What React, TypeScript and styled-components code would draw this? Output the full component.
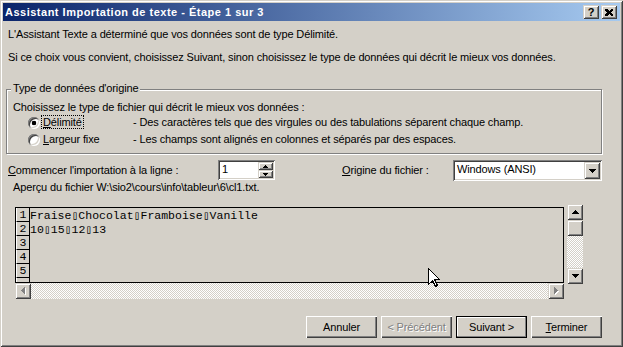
import React from 'react';
import styled, { createGlobalStyle, css } from 'styled-components';

const FACE = '#d4d0c8';

const GlobalStyle = createGlobalStyle`
  * { box-sizing: border-box; }
  html, body { margin: 0; padding: 0; background: ${FACE}; }
`;

// classic 3D bevels
const raised = css`
  background: ${FACE};
  box-shadow: inset 1px 1px ${FACE}, inset -1px -1px #404040, inset 2px 2px #fff, inset -2px -2px #808080;
`;
const sunken = css`
  background: #fff;
  box-shadow: inset 1px 1px #808080, inset -1px -1px #fff, inset 2px 2px #404040, inset -2px -2px ${FACE};
`;

const Window = styled.div`
  position: relative;
  width: 623px;
  height: 347px;
  padding: 3px;
  background: ${FACE};
  box-shadow: inset 1px 1px ${FACE}, inset -1px -1px #404040, inset 2px 2px #fff, inset -2px -2px #808080;
  font-family: "Liberation Sans", Arial, sans-serif;
  font-size: 11px;
  line-height: 13px;
  letter-spacing: -0.13px;
  color: #000;
  display: flex;
  flex-direction: column;
  overflow: hidden;
`;

const TitleBar = styled.div`
  flex: none;
  height: 18px;
  display: flex;
  align-items: center;
  padding: 0 3px 0 2px;
  background: linear-gradient(to right, #0a246a, #a6caf0);
  color: #fff;
  font-weight: bold;
  letter-spacing: 0.5px;
`;

const TitleText = styled.span`
  flex: 1;
  white-space: nowrap;
`;

const CaptionButton = styled.div`
  ${raised}
  width: 16px;
  height: 14px;
  display: flex;
  align-items: center;
  justify-content: center;
  color: #000;
  font-weight: bold;
  font-size: 11px;
  line-height: 11px;
  letter-spacing: 0;
  & + & {
    margin-left: 2px;
  }
`;

const Body = styled.div`
  flex: 1;
  display: flex;
  flex-direction: column;
  padding-left: 3px;
`;

const Intro = styled.p<{ $top: number }>`
  margin: ${p => p.$top}px 0 0 2px;
  white-space: nowrap;
`;

const Group = styled.div`
  position: relative;
  width: 596px;
  margin-top: 25px;
  padding: 11px 0 5px 6px;
  border: 1px solid #808080;
  box-shadow: 1px 1px #fff, inset 1px 1px #fff;
`;

const Legend = styled.span`
  position: absolute;
  top: -8px;
  left: 4px;
  padding: 0 2px;
  background: ${FACE};
  white-space: nowrap;
`;

const OptionRow = styled.div`
  display: flex;
  align-items: center;
  height: 17px;
  white-space: nowrap;
`;

const Radio = styled.span<{ $checked?: boolean }>`
  flex: none;
  width: 12px;
  height: 12px;
  margin-left: 15px;
  border-radius: 50%;
  background: ${p => (p.$checked ? 'radial-gradient(circle, #000 0 2px, #fff 2.6px)' : '#fff')};
  box-shadow: inset 1px 1px #808080, inset -1px -1px #fff, inset 2px 2px #404040, inset -2px -2px ${FACE};
`;

const OptionLabel = styled.span`
  width: 91px;
  margin-left: 2px;
`;

const Focus = styled.span<{ $on?: boolean }>`
  padding: 0 1px;
  outline: ${p => (p.$on ? '1px dotted #000' : 'none')};
`;

const ControlRow = styled.div`
  display: flex;
  align-items: flex-start;
  height: 21px;
  margin: 6px 0 0 2px;
  white-space: nowrap;
`;

const FieldLabel = styled.span<{ $width: number; $indent?: number }>`
  width: ${p => p.$width}px;
  margin-left: ${p => p.$indent ?? 0}px;
  padding-top: 4px;
`;

const Spinner = styled.div`
  ${sunken}
  width: 57px;
  height: 20px;
  padding: 2px;
  display: flex;
`;

const FieldValue = styled.span`
  flex: 1;
  padding: 1px 0 0 2px;
`;

const SpinButtons = styled.div`
  width: 15px;
  display: flex;
  flex-direction: column;
`;

const SpinButton = styled.div`
  ${raised}
  flex: 1;
  display: flex;
  align-items: center;
  justify-content: center;
`;

const Combo = styled.div`
  ${sunken}
  width: 149px;
  height: 21px;
  padding: 2px;
  display: flex;
`;

const DropButton = styled.div`
  ${raised}
  width: 16px;
  display: flex;
  align-items: center;
  justify-content: center;
`;

const Caption = styled.div`
  margin: 0 0 0 7px;
  height: 13px;
  white-space: nowrap;
`;

const PreviewArea = styled.div`
  display: flex;
  align-items: flex-start;
  margin: 10px 0 0 9px;
`;

const PreviewColumn = styled.div`
  width: 549px;
  margin-top: 3px;
`;

const Grid = styled.div`
  height: 76px;
  border: 1px solid #000;
  background: ${FACE};
  overflow: hidden;
  font-family: "Liberation Mono", "Courier New", monospace;
  font-size: 11.5px;
  line-height: 13px;
  letter-spacing: 0;
`;

const GridRow = styled.div`
  display: flex;
  height: 14px;
`;

const RowNumber = styled.div`
  flex: none;
  width: 14px;
  height: 14px;
  border-left: 1px solid #fff;
  border-right: 1px solid #000;
  border-bottom: 1px solid #000;
  text-align: center;
`;

const RowText = styled.div`
  padding-top: 1px;
  white-space: pre;
`;

const Tab = styled.span`
  font-family: "DejaVu Sans Mono", monospace;
  font-size: 11.5px;
`;

const HScroll = styled.div`
  display: flex;
  height: 16px;
`;

const Track = styled.div`
  flex: 1;
  background: repeating-conic-gradient(#fff 0 25%, ${FACE} 0 50%) 0 0 / 2px 2px;
`;

const ScrollButton = styled.div`
  ${raised}
  flex: none;
  width: 16px;
  height: 16px;
  display: flex;
  align-items: center;
  justify-content: center;
`;

const VScroll = styled.div`
  width: 16px;
  height: 80px;
  margin-left: 3px;
  display: flex;
  flex-direction: column;
`;

const Thumb = styled.div`
  ${raised}
  flex: none;
  height: 16px;
`;

const ButtonRow = styled.div`
  display: flex;
  gap: 4px;
  margin: 17px 0 0 300px;
`;

const PushButton = styled.div<{ $default?: boolean; $disabled?: boolean }>`
  width: 71px;
  height: 22px;
  display: flex;
  align-items: center;
  justify-content: center;
  background: ${FACE};
  white-space: nowrap;
  color: ${p => (p.$disabled ? '#808080' : '#000')};
  text-shadow: ${p => (p.$disabled ? '1px 1px #fff' : 'none')};
  box-shadow: ${p =>
    p.$default
      ? `inset 0 0 0 1px #000, inset -2px -2px #808080, inset 2px 2px #fff`
      : `inset 1px 1px #fff, inset -1px -1px #404040, inset -2px -2px #808080`};
`;

const Cursor = styled.svg`
  position: absolute;
  left: 428px;
  top: 268px;
`;

type Dir = 'up' | 'down' | 'left' | 'right';

// pixel triangle, like the Marlett glyphs
const Tri: React.FC<{ dir: Dir; n?: number; color?: string; shadow?: boolean }> = ({
  dir,
  n = 4,
  color = '#000',
  shadow,
}) => {
  const rects: React.ReactElement[] = [];
  for (let i = 0; i < n; i++) {
    const len = 2 * i + 1;
    const off = n - 1 - i;
    if (dir === 'up') rects.push(<rect key={i} x={off} y={i} width={len} height={1} />);
    if (dir === 'down') rects.push(<rect key={i} x={off} y={n - 1 - i} width={len} height={1} />);
    if (dir === 'left') rects.push(<rect key={i} x={i} y={off} width={1} height={len} />);
    if (dir === 'right') rects.push(<rect key={i} x={n - 1 - i} y={off} width={1} height={len} />);
  }
  const horiz = dir === 'up' || dir === 'down';
  const w = (horiz ? 2 * n - 1 : n) + (shadow ? 1 : 0);
  const h = (horiz ? n : 2 * n - 1) + (shadow ? 1 : 0);
  return (
    <svg width={w} height={h} shapeRendering="crispEdges">
      {shadow && (
        <g fill="#fff" transform="translate(1,1)">
          {rects}
        </g>
      )}
      <g fill={color}>{rects}</g>
    </svg>
  );
};

const rows = ['Fraise\tChocolat\tFramboise\tVanille', '10\t15\t12\t13', '', '', ''];

const renderLine = (line: string) =>
  line.split('\t').map((part, i) => (
    <React.Fragment key={i}>
      {i > 0 && <Tab>▯</Tab>}
      {part}
    </React.Fragment>
  ));

export default function App() {
  return (
    <>
      <GlobalStyle />
      <Window>
        <TitleBar>
          <TitleText>Assistant Importation de texte - Étape 1 sur 3</TitleText>
          <CaptionButton>?</CaptionButton>
          <CaptionButton>
            <svg width="8" height="7" shapeRendering="crispEdges">
              <path d="M0 0h2l2 2 2-2h2v1l-2 2.5 2 2.5v1h-2l-2-2-2 2h-2v-1l2-2.5-2-2.5z" fill="#000" />
            </svg>
          </CaptionButton>
        </TitleBar>

        <Body>
          <Intro $top={7}>L'Assistant Texte a déterminé que vos données sont de type Délimité.</Intro>
          <Intro $top={10}>Si ce choix vous convient, choisissez Suivant, sinon choisissez le type de données qui décrit le mieux vos données.</Intro>

          <Group>
            <Legend>Type de données d'origine</Legend>
            <div>Choisissez le type de fichier qui décrit le mieux vos données :</div>
            <OptionRow>
              <Radio $checked />
              <OptionLabel>
                <Focus $on>
                  <u>D</u>élimité
                </Focus>
              </OptionLabel>
              <span>- Des caractères tels que des virgules ou des tabulations séparent chaque champ.</span>
            </OptionRow>
            <OptionRow>
              <Radio />
              <OptionLabel>
                <Focus>
                  <u>L</u>argeur fixe
                </Focus>
              </OptionLabel>
              <span>- Les champs sont alignés en colonnes et séparés par des espaces.</span>
            </OptionRow>
          </Group>

          <ControlRow>
            <FieldLabel $width={210}>
              <u>C</u>ommencer l'importation à la ligne :
            </FieldLabel>
            <Spinner>
              <FieldValue>1</FieldValue>
              <SpinButtons>
                <SpinButton>
                  <Tri dir="up" n={3} />
                </SpinButton>
                <SpinButton>
                  <Tri dir="down" n={3} />
                </SpinButton>
              </SpinButtons>
            </Spinner>
            <FieldLabel $width={111} $indent={67}>
              <u>O</u>rigine du fichier :
            </FieldLabel>
            <Combo>
              <FieldValue>Windows (ANSI)</FieldValue>
              <DropButton>
                <Tri dir="down" />
              </DropButton>
            </Combo>
          </ControlRow>

          <Caption>Aperçu du fichier W:\sio2\cours\info\tableur\6\cl1.txt.</Caption>

          <PreviewArea>
            <PreviewColumn>
              <Grid>
                {rows.map((line, i) => (
                  <GridRow key={i}>
                    <RowNumber>{i + 1}</RowNumber>
                    <RowText>{renderLine(line)}</RowText>
                  </GridRow>
                ))}
                <GridRow>
                  <RowNumber />
                </GridRow>
              </Grid>
              <HScroll>
                <ScrollButton>
                  <Tri dir="left" color="#808080" shadow />
                </ScrollButton>
                <Track />
                <ScrollButton>
                  <Tri dir="right" color="#808080" shadow />
                </ScrollButton>
              </HScroll>
            </PreviewColumn>
            <VScroll>
              <ScrollButton>
                <Tri dir="up" />
              </ScrollButton>
              <Thumb />
              <Track />
              <ScrollButton>
                <Tri dir="down" />
              </ScrollButton>
            </VScroll>
          </PreviewArea>

          <ButtonRow>
            <PushButton>Annuler</PushButton>
            <PushButton $disabled>&lt; Précédent</PushButton>
            <PushButton $default>Suivant &gt;</PushButton>
            <PushButton>
              <span>
                <u>T</u>erminer
              </span>
            </PushButton>
          </ButtonRow>
        </Body>

        <Cursor width="12" height="20" viewBox="0 0 12 20" shapeRendering="crispEdges">
          <path d="M0.5 0.5V16.5L4.5 12.5L7.5 18.5L9.5 17.5L6.5 11.5H11.5Z" fill="#fff" stroke="#000" />
        </Cursor>
      </Window>
    </>
  );
}
